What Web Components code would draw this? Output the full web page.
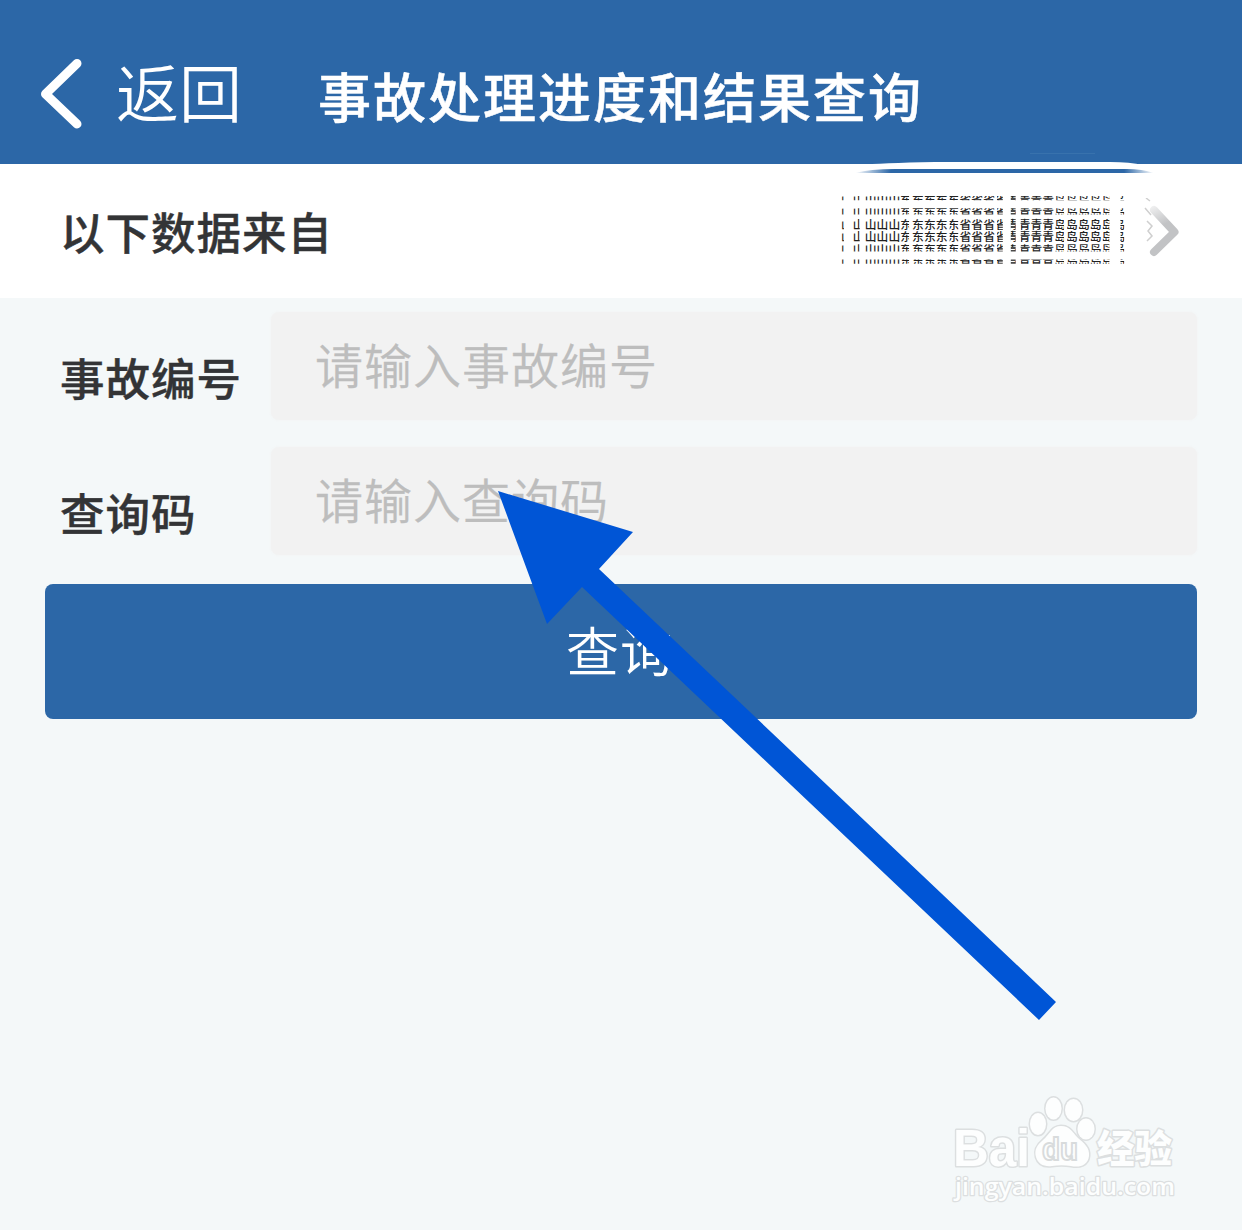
<!DOCTYPE html>
<html lang="zh-CN">
<head>
<meta charset="utf-8">
<title>事故处理进度和结果查询</title>
<style>
  body {
    margin: 0;
    width: 1242px;
    height: 1230px;
    overflow: hidden;
    background: #f4f8f9;
    color: #333436;
    font-family: "Noto Sans CJK SC", sans-serif;
  }
</style>
</head>
<body>
<query-page>
  <nav-header slot="header">
    <span slot="back">返回</span>
    事故处理进度和结果查询
  </nav-header>
  <source-row slot="source">以下数据来自</source-row>
  <form-field placeholder="请输入事故编号">事故编号</form-field>
  <form-field placeholder="请输入查询码">查询码</form-field>
  <submit-button>查询</submit-button>
  <pointer-arrow slot="overlay"></pointer-arrow>
  <site-watermark slot="overlay"></site-watermark>
</query-page>

<script>
class QueryPage extends HTMLElement {
  connectedCallback() {
    this.attachShadow({ mode: 'open' });
    this.shadowRoot.innerHTML = `
      <style>
        :host {
          display: block;
          position: relative;
          height: 1230px;
        }
        main {
          display: flex;
          flex-direction: column;
          gap: 27px;
          padding: 14px 45px 0;
        }
      </style>
      <slot name="header"></slot>
      <slot name="source"></slot>
      <main><slot></slot></main>
      <slot name="overlay"></slot>
    `;
  }
}
customElements.define('query-page', QueryPage);

class NavHeader extends HTMLElement {
  connectedCallback() {
    this.attachShadow({ mode: 'open' });
    this.shadowRoot.innerHTML = `
      <style>
        :host {
          display: flex;
          align-items: center;
          box-sizing: border-box;
          height: 164px;
          padding: 26px 0 0 40px;
          background: #2c67a7;
          color: #fff;
        }
        svg {
          width: 42px;
          height: 72px;
          margin-top: -2px;
        }
        .back {
          width: 204px;
          margin: -10px 0 0 34px;
          font-size: 63px;
          font-weight: 350;
          line-height: 80px;
          white-space: nowrap;
        }
        h1 {
          margin: 0 0 0 -2px;
          font-size: 53px;
          font-weight: 500;
          line-height: 70px;
          letter-spacing: 2px;
          white-space: nowrap;
          -webkit-text-stroke: .5px #fff;
        }
      </style>
      <svg viewBox="0 0 42 72" fill="none" stroke="#fff" stroke-width="9" stroke-linecap="round" stroke-linejoin="round">
        <path d="M37 5.500L5.500 36L37 66"/>
      </svg>
      <div class="back"><slot name="back"></slot></div>
      <h1><slot></slot></h1>
    `;
  }
}
customElements.define('nav-header', NavHeader);

class SourceRow extends HTMLElement {
  connectedCallback() {
    this.attachShadow({ mode: 'open' });
    this.shadowRoot.innerHTML = `
      <style>
        :host {
          display: flex;
          justify-content: space-between;
          position: relative;
          box-sizing: border-box;
          height: 134px;
          padding: 29px 63px 0 60px;
          background: #fff;
        }
        .label {
          height: 74px;
          font-size: 44.500px;
          font-weight: 500;
          line-height: 76px;
          letter-spacing: 1px;
          -webkit-text-stroke: .4px #333436;
        }
        .value {
          display: flex;
        }
        .chevron {
          width: 38px;
          height: 64px;
          margin-top: 5px;
        }
        .smudge {
          position: absolute;
          left: 855px;
          top: -12px;
          width: 300px;
          height: 24px;
        }
      </style>
      <div class="label"><slot></slot></div>
      <div class="value">
        <tiled-name></tiled-name>
        <svg class="chevron" viewBox="0 0 38 64" fill="none">
          <defs>
            <linearGradient id="fade" gradientUnits="userSpaceOnUse" x1="9" y1="6" x2="20" y2="28">
              <stop offset="0" stop-color="#c2c3c5" stop-opacity=".15"/>
              <stop offset="1" stop-color="#c2c3c5"/>
            </linearGradient>
          </defs>
          <path d="M13 12L33.500 34L13 54" stroke="url(#fade)" stroke-width="8" stroke-linecap="round" stroke-linejoin="round"/>
          <path d="M6 23l5 5-4 5 4 5-5 5M4 10l6 7M5 0l4 3" stroke="#cfcfcf" stroke-width="1.500"/>
        </svg>
      </div>
      <svg class="smudge" viewBox="0 0 300 24">
        <defs>
          <linearGradient id="band">
            <stop offset="0" stop-color="#2c67a7" stop-opacity="0"/>
            <stop offset=".12" stop-color="#2c67a7"/>
            <stop offset=".9" stop-color="#2c67a7"/>
            <stop offset="1" stop-color="#2c67a7" stop-opacity="0"/>
          </linearGradient>
        </defs>
        <path d="M5 13Q25 11 80 10H255Q275 10 288 13Z" fill="#fff"/>
        <path d="M0 21Q15 17 40 17H272Q287 17 299 21Z" fill="url(#band)"/>
        <path d="M175 1.500H240" stroke="#3872ad"/>
      </svg>
    `;
  }
}
customElements.define('source-row', SourceRow);

// Region name repeated in narrow columns and masked into horizontal slices.
class TiledName extends HTMLElement {
  connectedCallback() {
    // [glyph, hidden left, hidden right]
    const columns = [
      ['山', 0, 9], ['山', 0, 5], ['山', 0, 0], ['山', 0, 0], ['山', 0, 0], ['东', 0, 3],
      ['东', 0, 0], ['东', 0, 0], ['东', 0, 0], ['东', 2, 1], ['省', 0, 0], ['省', 0, 0],
      ['省', 0, 0], ['省', 2, 4], ['青', 4, 3], ['青', 2, 0], ['青', 0, 0], ['青', 0, 0],
      ['岛', 1, 2], ['岛', 1, 0], ['岛', 0, 0], ['岛', 0, 0], ['岛', 1, 4], ['岛', 7, 1]
    ];
    // [hidden top, hidden bottom]
    const slices = [[3, 5], [3, 3], [0, 0], [0, 0], [2, 3], [5, 3]];
    const rows = slices.map(([top, bottom]) => `
      <div class="slice" style="clip-path:inset(${top}px 0 ${bottom}px)">
        ${columns.map(([char, left, right]) =>
          `<span${left || right ? ` style="clip-path:inset(0 ${right}px 0 ${left}px)"` : ''}>${char}</span>`
        ).join('')}
      </div>`).join('');

    this.attachShadow({ mode: 'open' });
    this.shadowRoot.innerHTML = `
      <style>
        :host {
          display: block;
          width: 300px;
        }
        .slice {
          display: flex;
          height: 12.300px;
        }
        span {
          flex: none;
          width: 11.850px;
          color: #222;
          font-size: 11.750px;
          font-weight: 500;
          line-height: 12.300px;
        }
      </style>
      ${rows}
    `;
  }
}
customElements.define('tiled-name', TiledName);

class FormField extends HTMLElement {
  connectedCallback() {
    this.attachShadow({ mode: 'open' });
    this.shadowRoot.innerHTML = `
      <style>
        :host {
          display: flex;
          height: 108px;
        }
        label {
          box-sizing: border-box;
          width: 226px;
          padding: 25px 0 0 15px;
          font-size: 44.500px;
          font-weight: 500;
          line-height: 80px;
          letter-spacing: 1px;
          white-space: nowrap;
          -webkit-text-stroke: .4px #333436;
        }
        .box {
          flex: 1;
          padding-left: 44px;
          border-radius: 8px;
          background: #f2f2f2;
          box-shadow: 0 0 3px #f2f2f2;
          color: #bdbdbd;
          font-size: 48px;
          font-weight: 350;
          line-height: 103px;
          letter-spacing: 1px;
          -webkit-text-stroke: .3px #bdbdbd;
        }
      </style>
      <label><slot></slot></label>
      <div class="box">${this.getAttribute('placeholder')}</div>
    `;
  }
}
customElements.define('form-field', FormField);

class SubmitButton extends HTMLElement {
  connectedCallback() {
    this.attachShadow({ mode: 'open' });
    this.shadowRoot.innerHTML = `
      <style>
        :host {
          display: block;
          margin-top: 2px;
        }
        button {
          display: block;
          width: 100%;
          height: 135px;
          padding: 0 2px 4px 0;
          border: 0;
          border-radius: 8px;
          background: #2c67a7;
          color: #fff;
          font: 350 53px/131px "Noto Sans CJK SC", sans-serif;
          letter-spacing: 1px;
        }
      </style>
      <button type="button"><slot></slot></button>
    `;
  }
}
customElements.define('submit-button', SubmitButton);

class PointerArrow extends HTMLElement {
  connectedCallback() {
    this.attachShadow({ mode: 'open' });
    this.shadowRoot.innerHTML = `
      <style>
        :host {
          position: absolute;
          left: 498px;
          top: 490px;
          width: 560px;
          height: 530px;
        }
        svg {
          display: block;
        }
      </style>
      <svg width="560" height="530" viewBox="0 0 560 530">
        <path d="M0 1L135 42L101 79L558 512L541 530L84 97L49 134Z" fill="#0055d6"/>
      </svg>
    `;
  }
}
customElements.define('pointer-arrow', PointerArrow);

class SiteWatermark extends HTMLElement {
  connectedCallback() {
    this.attachShadow({ mode: 'open' });
    this.shadowRoot.innerHTML = `
      <style>
        :host {
          position: absolute;
          left: 950px;
          top: 1090px;
        }
        svg {
          display: block;
        }
        .outline {
          fill: #fdfefe;
          stroke: #dcdfe0;
          stroke-width: 3px;
          stroke-linejoin: round;
          paint-order: stroke;
        }
        .brand {
          font: bold 51px "Liberation Sans", sans-serif;
        }
        .du {
          fill: #fdfefe;
          stroke: #d8dbdc;
          stroke-width: 2px;
          font: bold 32px "Liberation Sans", sans-serif;
        }
        .name {
          font: 900 38px "Noto Sans CJK SC", sans-serif;
        }
        .url {
          stroke-width: 2.500px;
          font: 600 24px "Open Sans", sans-serif;
        }
      </style>
      <svg width="235" height="125" viewBox="0 0 235 125">
        <text class="outline brand" x="3" y="76" textLength="77" lengthAdjust="spacingAndGlyphs">Bai</text>
        <g class="outline">
          <ellipse cx="88" cy="34" rx="8" ry="11"/>
          <ellipse cx="103.500" cy="18.500" rx="8" ry="11"/>
          <ellipse cx="123.500" cy="20" rx="8.500" ry="11"/>
          <ellipse cx="136" cy="39" rx="8.500" ry="10.500"/>
          <path d="M111 36C102 36 100 44 93 50C87 55 84 60 86 67C88 74 94 77 102 76C108 75 115 75 121 76C130 78 138 75 139 66C140 58 134 53 128 48C122 42 120 36 111 36Z"/>
        </g>
        <text class="du" x="92" y="70" textLength="36" lengthAdjust="spacingAndGlyphs">du</text>
        <text class="outline name" x="147" y="72" textLength="75" lengthAdjust="spacingAndGlyphs">经验</text>
        <text class="outline url" x="5" y="105" textLength="220" lengthAdjust="spacingAndGlyphs">jingyan.baidu.com</text>
      </svg>
    `;
  }
}
customElements.define('site-watermark', SiteWatermark);
</script>
</body>
</html>
